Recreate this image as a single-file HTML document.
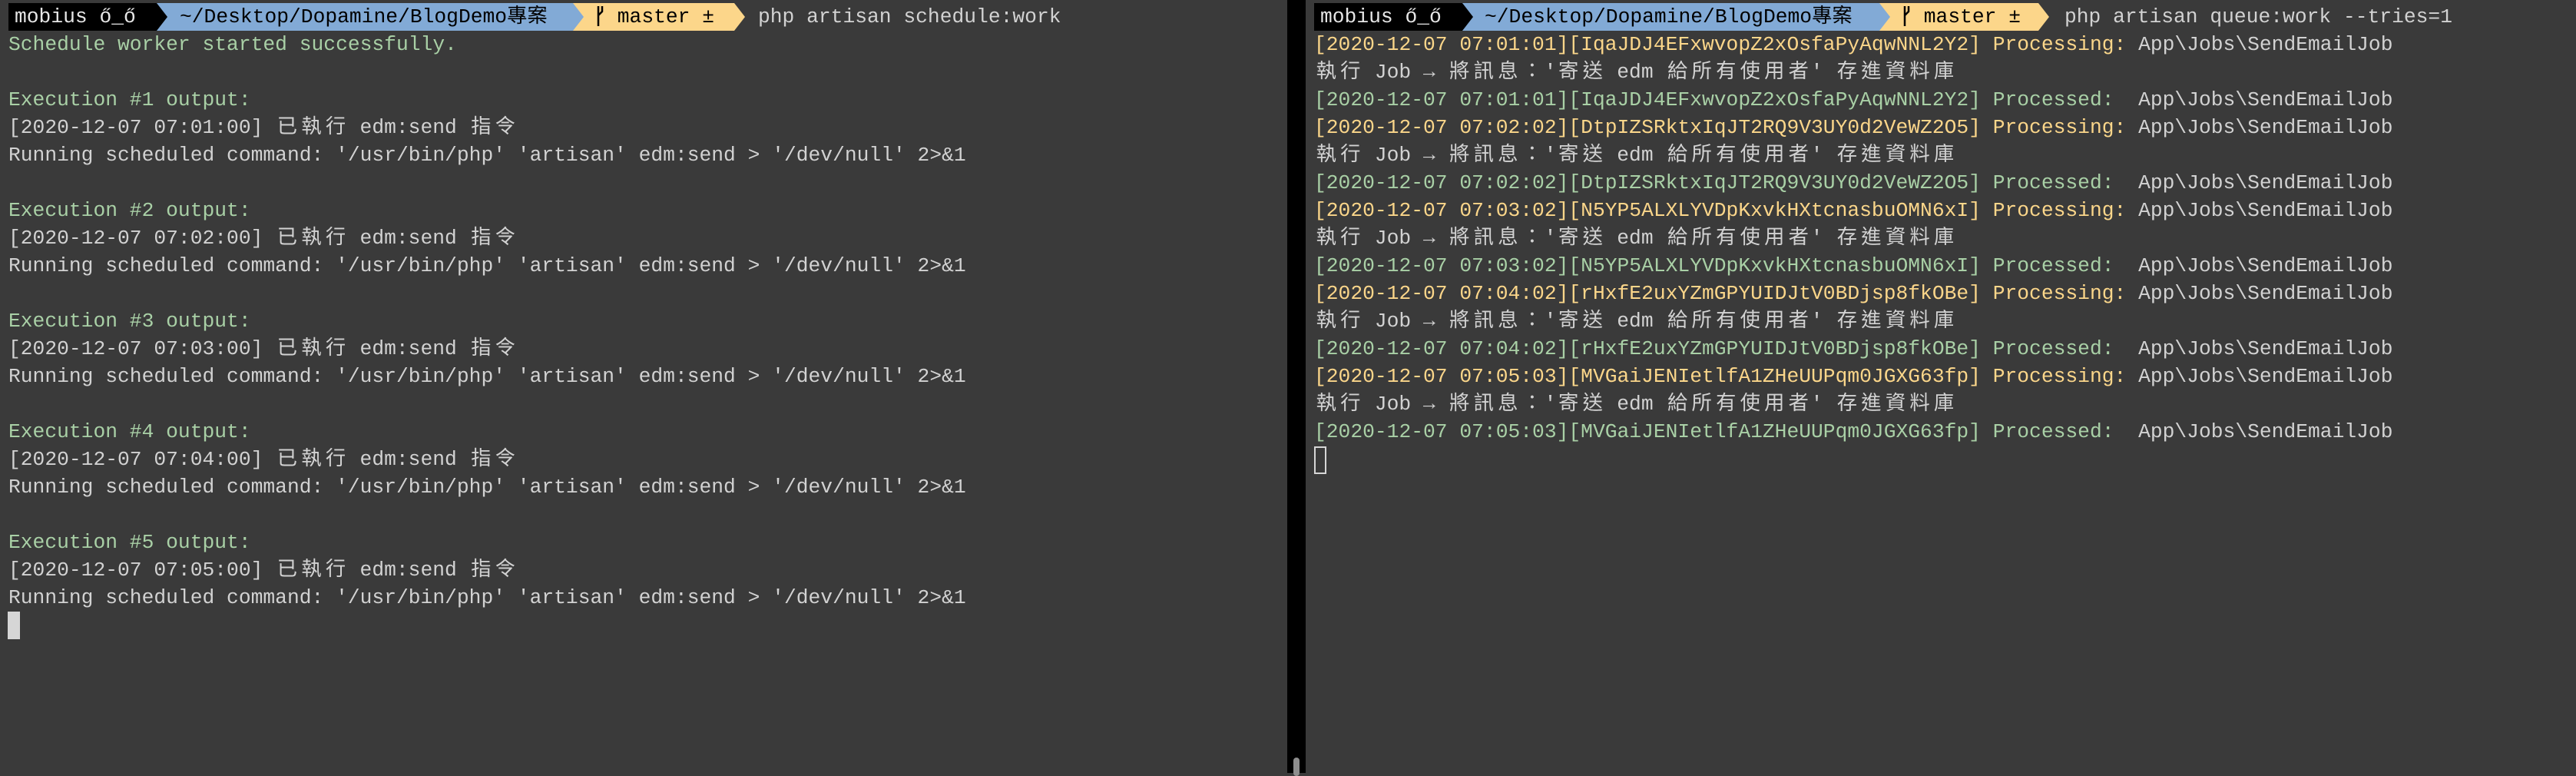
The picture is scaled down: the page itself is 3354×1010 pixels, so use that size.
<!DOCTYPE html>
<html><head><meta charset="utf-8">
<style>
html,body{margin:0;padding:0;}
body{width:3354px;height:1006px;background:#3a3a3a;position:relative;overflow:hidden;
font-family:"Liberation Mono","Noto Sans CJK TC",monospace;font-size:26.3px;color:#d2d2d2;}
.div{position:absolute;left:1676px;top:0;width:24px;height:1006px;background:#000;}
.sb{position:absolute;left:1684px;top:986px;width:8px;height:24px;border-radius:4px;background:#8e8e8e;}
.row{position:absolute;height:36px;line-height:36px;white-space:pre;}
.g{color:#a9d0a6}.y{color:#fbd68a}
.w{display:inline-block;width:31.54px;text-align:center;}
.seg{position:absolute;top:4px;height:36px;line-height:36px;white-space:pre;color:#000;box-sizing:border-box;
clip-path:polygon(0 0,calc(100% - 14px) 0,100% 50%,calc(100% - 14px) 100%,0 100%);}
.blk{background:#000;color:#e6e6e6;}
.blu{background:#82aad6;}
.yel{background:#fcd68a;}
</style></head><body>
<div class="div"></div><div class="sb"></div>

<!-- left prompt -->
<div class="seg yel" style="left:746px;width:224px;padding-left:28px"><svg width="14" height="30" style="vertical-align:-7px"><path d="M5 2V28M5 14L10 9V2" stroke="#000" stroke-width="2.5" fill="none"/></svg> master ±</div>
<div class="seg blu" style="left:204px;width:556px;padding-left:30px">~/Desktop/Dopamine/BlogDemo專案</div>
<div class="seg blk" style="left:11px;width:207px;padding-left:8px">mobius ő_ő</div>
<div class="row" style="left:987px;top:4px">php artisan schedule:work</div>

<!-- right prompt -->
<div class="seg yel" style="left:2447px;width:221px;padding-left:28px"><svg width="14" height="30" style="vertical-align:-7px"><path d="M5 2V28M5 14L10 9V2" stroke="#000" stroke-width="2.5" fill="none"/></svg> master ±</div>
<div class="seg blu" style="left:1903px;width:558px;padding-left:30px">~/Desktop/Dopamine/BlogDemo專案</div>
<div class="seg blk" style="left:1711px;width:207px;padding-left:8px">mobius ő_ő</div>
<div class="row" style="left:2688px;top:4px">php artisan queue:work --tries=1</div>

<div style="position:absolute;left:10px;top:796px;width:16px;height:36px;background:#d6d6d6"></div>
<div style="position:absolute;left:1711px;top:581px;width:12px;height:32px;border:2px solid #d6d6d6"></div>

<script>
function cjk(s){return s.replace(/([\u3000-\u9fff\uff00-\uffef\u27f6])/g,'<span class="w">$1</span>');}
function row(x,i,html){var d=document.createElement('div');d.className='row';d.style.left=x+'px';d.style.top=(4+36*i)+'px';d.innerHTML=cjk(html);document.body.appendChild(d);}
row(11,1,'<span class="g">Schedule worker started successfully.</span>');
for(var k=0;k<5;k++){var b=3+4*k;
row(11,b,'<span class="g">Execution #'+(k+1)+' output:</span>');
row(11,b+1,'[2020-12-07 07:0'+(k+1)+':00] 已執行 edm:send 指令');
row(11,b+2,"Running scheduled command: '/usr/bin/php' 'artisan' edm:send > '/dev/null' 2>&amp;1");}
var J=[['07:01:01','IqaJDJ4EFxwvopZ2xOsfaPyAqwNNL2Y2'],['07:02:02','DtpIZSRktxIqJT2RQ9V3UY0d2VeWZ2O5'],['07:03:02','N5YP5ALXLYVDpKxvkHXtcnasbuOMN6xI'],['07:04:02','rHxfE2uxYZmGPYUIDJtV0BDjsp8fkOBe'],['07:05:03','MVGaiJENIetlfA1ZHeUUPqm0JGXG63fp']];
for(var k=0;k<5;k++){var b=1+3*k,p='[2020-12-07 '+J[k][0]+']['+J[k][1]+']';
row(1711,b,'<span class="y">'+p+' Processing:</span> App\\Jobs\\SendEmailJob');
row(1711,b+1,"執行 Job → 將訊息：'寄送 edm 給所有使用者' 存進資料庫");
row(1711,b+2,'<span class="g">'+p+' Processed: </span> App\\Jobs\\SendEmailJob');}
</script>
</body></html>
